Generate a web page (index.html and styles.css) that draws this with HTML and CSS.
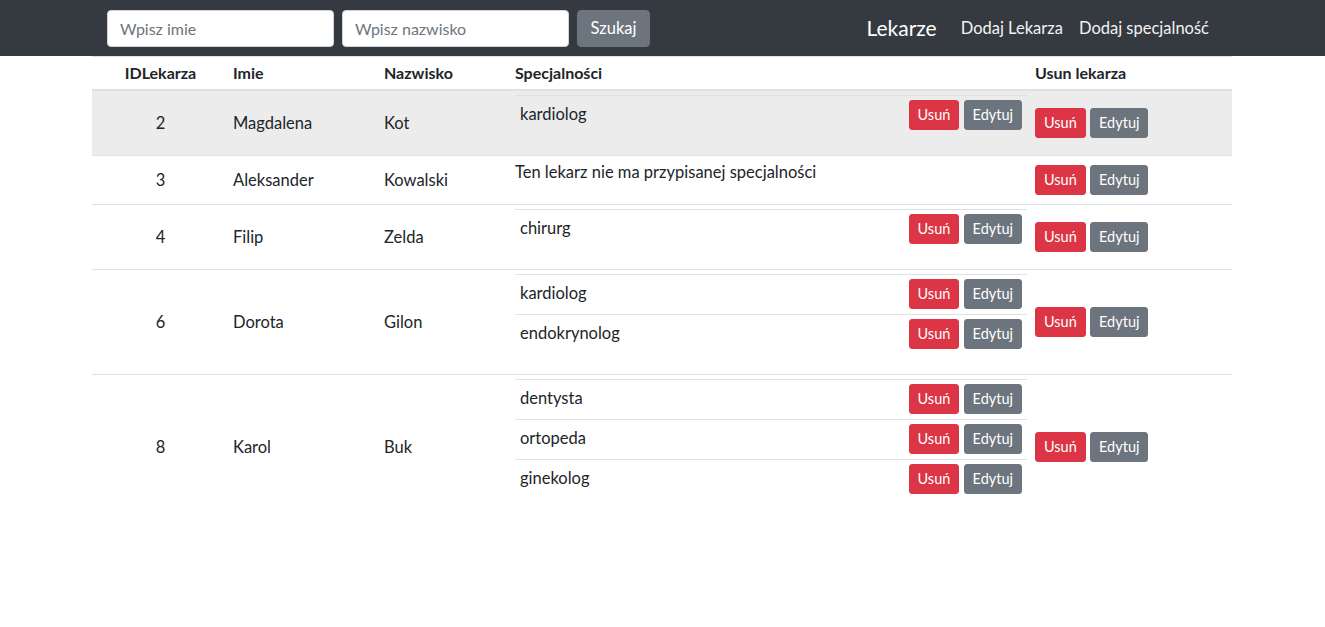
FILE: index.html
```html
<!DOCTYPE html>
<html lang="pl">
<head>
<meta charset="utf-8">
<title>Lekarze</title>
<link rel="stylesheet" href="styles.css">
</head>
<body>
<nav class="navbar">
  <div class="container nav-inner">
    <form class="search">
      <input class="field" type="text" placeholder="Wpisz imie">
      <input class="field" type="text" placeholder="Wpisz nazwisko">
      <button class="btn-search" type="button">Szukaj</button>
    </form>
    <div class="nav-right">
      <span class="brand">Lekarze</span>
      <a class="nav-link">Dodaj Lekarza</a>
      <a class="nav-link">Dodaj specjalność</a>
    </div>
  </div>
</nav>
<div class="container">
  <table class="doctors">
    <colgroup>
      <col class="c-id"><col class="c-name"><col class="c-surname"><col class="c-spec"><col class="c-del">
    </colgroup>
    <thead>
      <tr><th class="center">IDLekarza</th><th>Imie</th><th>Nazwisko</th><th>Specjalności</th><th>Usun lekarza</th></tr>
    </thead>
    <tbody>
      <tr class="hover">
        <td class="center">2</td><td>Magdalena</td><td>Kot</td>
        <td class="spec">
          <table class="inner">
            <tr><td class="sname">kardiolog</td><td class="acts"><button class="btn red">Usuń</button> <button class="btn gray">Edytuj</button></td></tr>
          </table>
        </td>
        <td><button class="btn red">Usuń</button> <button class="btn gray">Edytuj</button></td>
      </tr>
      <tr>
        <td class="center">3</td><td>Aleksander</td><td>Kowalski</td>
        <td class="spec"><p class="none">Ten lekarz nie ma przypisanej specjalności</p></td>
        <td><button class="btn red">Usuń</button> <button class="btn gray">Edytuj</button></td>
      </tr>
      <tr>
        <td class="center">4</td><td>Filip</td><td>Zelda</td>
        <td class="spec">
          <table class="inner">
            <tr><td class="sname">chirurg</td><td class="acts"><button class="btn red">Usuń</button> <button class="btn gray">Edytuj</button></td></tr>
          </table>
        </td>
        <td><button class="btn red">Usuń</button> <button class="btn gray">Edytuj</button></td>
      </tr>
      <tr>
        <td class="center">6</td><td>Dorota</td><td>Gilon</td>
        <td class="spec">
          <table class="inner">
            <tr><td class="sname">kardiolog</td><td class="acts"><button class="btn red">Usuń</button> <button class="btn gray">Edytuj</button></td></tr>
            <tr><td class="sname">endokrynolog</td><td class="acts"><button class="btn red">Usuń</button> <button class="btn gray">Edytuj</button></td></tr>
          </table>
        </td>
        <td><button class="btn red">Usuń</button> <button class="btn gray">Edytuj</button></td>
      </tr>
      <tr>
        <td class="center">8</td><td>Karol</td><td>Buk</td>
        <td class="spec">
          <table class="inner">
            <tr><td class="sname">dentysta</td><td class="acts"><button class="btn red">Usuń</button> <button class="btn gray">Edytuj</button></td></tr>
            <tr><td class="sname">ortopeda</td><td class="acts"><button class="btn red">Usuń</button> <button class="btn gray">Edytuj</button></td></tr>
            <tr><td class="sname">ginekolog</td><td class="acts"><button class="btn red">Usuń</button> <button class="btn gray">Edytuj</button></td></tr>
          </table>
        </td>
        <td><button class="btn red">Usuń</button> <button class="btn gray">Edytuj</button></td>
      </tr>
    </tbody>
  </table>
</div>
</body>
</html>
```
FILE: styles.css
```css
* { box-sizing: border-box; }
body {
  margin: 0;
  font-family: Lato, "Liberation Sans", sans-serif;
  font-size: 16.5px;
  line-height: 24px;
  color: #212529;
  background: #fff;
}
.container {
  width: 1140px;
  margin: 0 0 0 92px;
}
.navbar {
  background: #343a40;
  height: 56px;
}
.nav-inner {
  display: flex;
  justify-content: space-between;
  align-items: center;
  height: 56px;
  padding: 0 15px;
}
.search {
  display: flex;
  align-items: center;
  margin: 0;
}
.field {
  width: 227px;
  height: 37px;
  margin-right: 8px;
  padding: 6px 12px;
  border: 1px solid #ced4da;
  border-radius: 4px;
  font-family: inherit;
  font-size: 16px;
  color: #495057;
  background: #fff;
}
.field::placeholder { color: #6c757d; }
.btn-search {
  width: 73px;
  height: 37px;
  border: 1px solid #6c757d;
  background: #6c757d;
  color: #fff;
  border-radius: 4px;
  font-family: inherit;
  font-size: 16.5px;
  padding: 0;
}
.nav-right {
  display: flex;
  align-items: center;
}
.brand {
  color: #fff;
  font-size: 21px;
  line-height: 30px;
  margin-right: 16px;
}
.nav-link {
  color: #f2f2f2;
  padding: 8px;
  font-size: 16.5px;
}
.doctors {
  width: 1140px;
  border-collapse: collapse;
  table-layout: fixed;
}
.c-id { width: 137px; }
.c-name { width: 151px; }
.c-surname { width: 131px; }
.c-spec { width: 520px; }
.c-del { width: 201px; }
.doctors th,
.doctors > tbody > tr > td {
  padding: 4px;
  border-top: 1px solid #dee2e6;
  text-align: left;
}
.doctors th {
  vertical-align: bottom;
  border-bottom: 2px solid #dee2e6;
  font-weight: 700;
  font-size: 16px;
}
.doctors > tbody > tr > td { vertical-align: middle; }
.doctors .center { text-align: center; }
.doctors tr.hover { background: #ececec; }
.inner {
  width: 100%;
  border-collapse: collapse;
  margin-bottom: 16px;
}
.inner td {
  border-top: 1px solid #dee2e6;
  padding: 4px 5px 5px;
  vertical-align: top;
  text-align: left;
}
.inner td.sname { padding-top: 6px; }
.inner td.acts {
  width: 1%;
  white-space: nowrap;
  text-align: right;
}
.none { margin: 0 0 16px; }
.btn {
  display: inline-block;
  height: 30px;
  padding: 0 8px;
  border: 1px solid transparent;
  border-radius: 3px;
  color: #fff;
  font-family: inherit;
  font-size: 14.5px;
  line-height: 28px;
  vertical-align: middle;
}
.btn.red { background: #dc3545; border-color: #dc3545; }
.btn.gray { background: #6c757d; border-color: #6c757d; }
```
